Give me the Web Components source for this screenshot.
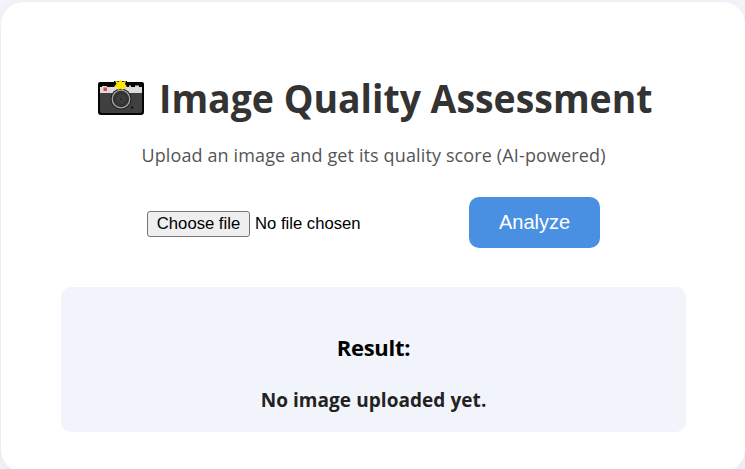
<!DOCTYPE html>
<html lang="en">
<head>
<meta charset="utf-8">
<title>Image Quality Assessment</title>
<style>
html,body{margin:0;height:100%;overflow:hidden}
body{background:#f4f6fb;font-family:"Open Sans","Noto Sans",sans-serif}
</style>
</head>
<body>
<quality-card>
  <page-title slot="title">Image Quality Assessment</page-title>
  <span slot="intro">Upload an image and get its quality score (AI-powered)</span>
  <upload-form slot="form">Analyze</upload-form>
  <result-panel slot="result"><span slot="heading">Result:</span>No image uploaded yet.</result-panel>
</quality-card>
<script>
function define(name, markup) {
  const template = document.createElement('template');
  template.innerHTML = markup;
  customElements.define(name, class extends HTMLElement {
    constructor() {
      super();
      this.attachShadow({mode: 'open'}).append(template.content.cloneNode(true));
    }
  });
}

define('camera-icon', `
<style>:host{display:block;width:48px;height:38px}svg{display:block}</style>
<svg width="48" height="38" viewBox="0 0 48 38" aria-hidden="true">
  <path d="M3 3H17V2H30V3H45Q47 3 47 5V33Q47 36 44 36H4Q1 36 1 33V5Q1 3 3 3Z" fill="#050505"/>
  <path d="M3 8H45V15H3Z" fill="#dcdcdc"/>
  <path d="M3 14H45V32Q45 34 43 34H5Q3 34 3 32Z" fill="#404040"/>
  <path d="M5 7H10V8H5ZM32 6.5H34V8H32ZM38 6.5H42V8H38Z" fill="#d5d5d5"/>
  <rect x="6.5" y="8.5" width="3.5" height="3.5" fill="#ef4632"/>
  <circle cx="24" cy="20" r="10.5" fill="#202020"/>
  <circle cx="24" cy="20" r="8.8" fill="#333" stroke="#a4a4a4" stroke-width="1.3"/>
  <circle cx="24" cy="20" r="5.7" fill="#3c3c3c" stroke="#333"/>
  <circle cx="24" cy="20" r="1" fill="#262626"/>
  <circle cx="35" cy="28.5" r="1.3" fill="#151515"/>
  <path d="M18 1.5L21.5 3L23.5 .8L25.5 3L29 2L28 5L30 7.5L27 8.5L26 11L23.5 9.5L21 11L20 8.5L17 7.5L19.5 5Z" fill="#ffe500"/>
</svg>`);

define('page-title', `
<style>
:host{display:flex;align-items:center;height:56px;padding-left:36px}
camera-icon{margin:-2px 14px 0 0}
h1{margin:-3px 0 0;font-size:40px;line-height:56px;font-weight:700;color:#333;white-space:nowrap;transform:scaleX(.935);transform-origin:left}
</style>
<camera-icon></camera-icon><h1><slot></slot></h1>`);

define('upload-form', `
<style>
:host{display:flex;align-items:center;height:51px;padding-left:86px;font-family:"Liberation Sans",Arial,sans-serif}
.file{display:flex;align-items:center;width:322px;font-size:16.67px;color:#000;white-space:nowrap;padding-top:2px}
.choose{box-sizing:border-box;width:103px;height:26px;padding:0;margin:0 5px 0 0;border:1px solid #767676;border-radius:3px;background:#efefef;font:inherit;color:#000}
.submit{width:131px;height:51px;padding:0;border:0;border-radius:10px;background:#4a90e2;color:#fff;font:20px "Liberation Sans",Arial,sans-serif}
</style>
<div class="file"><button class="choose" type="button">Choose file</button><span>No file chosen</span></div>
<button class="submit" type="button"><slot></slot></button>`);

define('result-panel', `
<style>
:host{display:flex;flex-direction:column;align-items:center;height:145px;box-sizing:border-box;padding-top:43px;border-radius:10px;background:#f1f4fb}
h3{margin:0;font-size:22px;line-height:34px;color:#000;letter-spacing:-.3px}
p{margin:21px 0 0;font-size:19px;line-height:30px;font-weight:700;color:#222;letter-spacing:.06px}
</style>
<h3><slot name="heading"></slot></h3><p><slot></slot></p>`);

define('quality-card', `
<style>
:host{display:block;box-sizing:border-box;width:744px;height:470px;margin:2px 0 0 1px;padding:69px 59px 40px 60px;border-radius:22px;background:#fff;box-shadow:0 5px 25px rgba(0,0,0,.08)}
.intro{margin:13px 0 27px;text-align:center;font-size:18px;line-height:30px;color:#555;letter-spacing:.13px}
.result{margin-top:39px}
</style>
<slot name="title"></slot><div class="intro"><slot name="intro"></slot></div>
<slot name="form"></slot><div class="result"><slot name="result"></slot></div>`);
</script>
</body>
</html>
